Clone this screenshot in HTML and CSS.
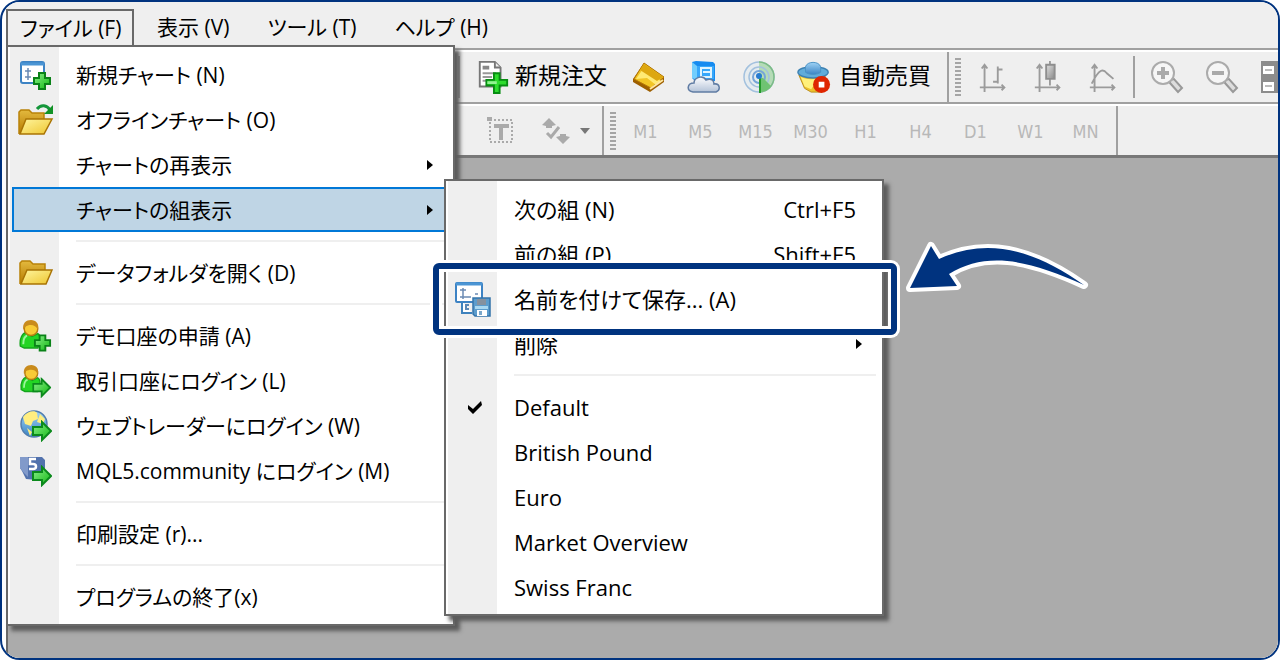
FILE: index.html
```html
<!DOCTYPE html>
<html lang="ja">
<head>
<meta charset="utf-8">
<title>チャートの組表示</title>
<meta name="viewport" content="width=device-width, initial-scale=1">
<link rel="stylesheet" href="styles.css">
</head>
<body>
<svg class="defs" width="0" height="0" aria-hidden="true">
  <defs>
    <linearGradient id="gold" x1="0" y1="0" x2="1" y2="1"><stop offset="0" stop-color="#fff6a0"/><stop offset="1" stop-color="#eec52e"/></linearGradient>
    <linearGradient id="goldDark" x1="0" y1="0" x2="0" y2="1"><stop offset="0" stop-color="#e3b93e"/><stop offset="1" stop-color="#b67a00"/></linearGradient>
    <linearGradient id="green" x1="0" y1="0" x2="1" y2="1"><stop offset="0" stop-color="#8cf08c"/><stop offset="1" stop-color="#12b812"/></linearGradient>
    <linearGradient id="blue" x1="0" y1="0" x2="0" y2="1"><stop offset="0" stop-color="#9fd2f5"/><stop offset="1" stop-color="#3b85c4"/></linearGradient>
    <linearGradient id="steel" x1="0" y1="0" x2="0" y2="1"><stop offset="0" stop-color="#fdfdfe"/><stop offset="1" stop-color="#b4c3d8"/></linearGradient>
    <linearGradient id="grey" x1="0" y1="0" x2="1" y2="1"><stop offset="0" stop-color="#e0e0e0"/><stop offset="1" stop-color="#888"/></linearGradient>
    <symbol id="arrow" viewBox="0 0 20 22"><path d="M1 7h9V2l9 9-9 9v-5H1z" fill="url(#green)" stroke="#0b8a1c" stroke-width="2"/></symbol>
    <symbol id="plus" viewBox="0 0 20 20"><path d="M7 2h6v5h5v6h-5v5H7v-5H2V7h5z" fill="url(#green)" stroke="#0a8218" stroke-width="2"/></symbol>
    <symbol id="person" viewBox="0 0 24 32"><path d="M1 28c-1-8 2-13 6-14l6 4 6-3c3 2 3 6 2 10l-2 5H5z" fill="#24d524" stroke="#14a41c" stroke-width="1.5"/><path d="M4 26c0-5 1-8 4-9" stroke="#9cf59c" stroke-width="2" fill="none"/><circle cx="12" cy="10" r="7" fill="#f8cb35" stroke="#b67d12" stroke-width="1.5"/><path d="M4 11C3 4 7 1 12 1s9 4 7 10c-2-5-8-6-13-3z" fill="#c98b1c"/></symbol>
  </defs>
</svg>
<div class="app">
  <div class="window">
    <header class="menubar">
      <nav class="menubar-items" aria-label="メニュー">
        <button class="menu-title is-open" type="button" aria-haspopup="menu" aria-expanded="true">ファイル (F)</button>
        <button class="menu-title" type="button">表示 (V)</button>
        <button class="menu-title" type="button">ツール (T)</button>
        <button class="menu-title" type="button">ヘルプ (H)</button>
      </nav>

      <div class="menu file-menu" role="menu" aria-label="ファイル">
        <button class="item" role="menuitem" type="button">
          <span class="item-icon"><svg class="icon" viewBox="0 0 34 32"><rect x="2" y="3" width="23" height="21" rx="2" fill="#fff" stroke="#3d83c4" stroke-width="2"/><path d="M2 5h23" stroke="#4b95d4" stroke-width="3"/><path d="M9 9v12M6 12h6M6 18h6" stroke="#6b8bb4" stroke-width="1.5"/><use href="#plus" x="13" y="12" width="20" height="20"/></svg></span>
          <span class="label">新規チャート (N)</span></button>
        <button class="item" role="menuitem" type="button">
          <span class="item-icon"><svg class="icon wide" viewBox="0 0 38 34"><path d="M2 31V9l2-2h8l3 3h12v7" fill="url(#goldDark)" stroke="#b98209" stroke-width="1.5"/><path d="M3 31l6-15h26l-8 15z" fill="url(#gold)" stroke="#a97405" stroke-width="1.5"/><path d="M20 6c4-5 10-4 13 1" fill="none" stroke="#14963a" stroke-width="3"/><path d="M36 2v9h-9z" fill="#119226"/></svg></span>
          <span class="label">オフラインチャート (O)</span></button>
        <button class="item" role="menuitem" type="button" aria-haspopup="menu"><span class="item-icon"></span><span class="label">チャートの再表示</span><svg class="more" viewBox="0 0 6 10"><path d="M0 0l6 5-6 5z"/></svg></button>
        <button class="item is-active" role="menuitem" type="button" aria-haspopup="menu" aria-expanded="true"><span class="item-icon"></span><span class="label">チャートの組表示</span><svg class="more" viewBox="0 0 6 10"><path d="M0 0l6 5-6 5z"/></svg></button>
        <hr class="rule">
        <button class="item" role="menuitem" type="button">
          <span class="item-icon"><svg class="icon" viewBox="0 0 34 32"><path d="M1 27V6l2-2h8l3 3h12v7" fill="url(#goldDark)" stroke="#b98209" stroke-width="1.5"/><path d="M2 27l6-14h25l-6 14z" fill="url(#gold)" stroke="#a97405" stroke-width="1.5"/></svg></span>
          <span class="label">データフォルダを開く (D)</span></button>
        <hr class="rule">
        <button class="item" role="menuitem" type="button"><span class="item-icon"><svg class="icon" viewBox="0 0 34 34"><use href="#person" x="0" y="0" width="24" height="31"/><use href="#plus" x="14" y="14" width="19" height="20"/></svg></span><span class="label">デモ口座の申請 (A)</span></button>
        <button class="item" role="menuitem" type="button"><span class="item-icon"><svg class="icon" viewBox="0 0 34 36"><use href="#person" x="0" y="0" width="24" height="31"/><use href="#arrow" x="13" y="14" width="20" height="22"/></svg></span><span class="label">取引口座にログイン (L)</span></button>
        <button class="item" role="menuitem" type="button"><span class="item-icon"><svg class="icon" viewBox="0 0 34 34"><circle cx="15" cy="15" r="13" fill="url(#blue)" stroke="#527eae" stroke-width="1.5"/><path d="M4 8c4-6 12-7 14-4l1 6-5 2-2 5-6-2zM21 5l5 5-2 5-6-2zM8 19l5 4-2 4z" fill="#ffee80"/><use href="#arrow" x="13" y="11" width="20" height="22"/></svg></span><span class="label">ウェブトレーダーにログイン (W)</span></button>
        <button class="item" role="menuitem" type="button"><span class="item-icon"><svg class="icon" viewBox="0 0 34 34"><path d="M1 3h22l3 3v16l-8 4-11-1-4-8-2-3z" fill="#5272ad"/><path d="M1 3h8v20l-4-4-4-5z" fill="#819aca"/><path d="M17 5h-6v5h3c4 0 4 5 0 5h-4" fill="none" stroke="#fff" stroke-width="2.5"/><use href="#arrow" x="13" y="11" width="20" height="22"/></svg></span><span class="label">MQL5.community にログイン (M)</span></button>
        <hr class="rule">
        <button class="item" role="menuitem" type="button"><span class="item-icon"></span><span class="label">印刷設定 (r)...</span></button>
        <hr class="rule">
        <button class="item" role="menuitem" type="button"><span class="item-icon"></span><span class="label">プログラムの終了(x)</span></button>
      </div>

      <div class="menu sub-menu" role="menu" aria-label="チャートの組表示">
        <button class="item" role="menuitem" type="button"><span class="item-icon"></span><span class="label">次の組 (N)</span><span class="keys">Ctrl+F5</span></button>
        <button class="item" role="menuitem" type="button"><span class="item-icon"></span><span class="label">前の組 (P)</span><span class="keys">Shift+F5</span></button>
        <button class="item" role="menuitem" type="button">
          <span class="item-icon"><svg class="icon wide" viewBox="0 0 38 36"><path d="M8 20v12h10" fill="#fff" stroke="#3e82bd" stroke-width="2"/><path d="M15 24h-3v4h3" fill="none" stroke="#5b88b6" stroke-width="2"/><rect x="2" y="2" width="26" height="19" rx="1" fill="#fff" stroke="#3d83c4" stroke-width="2"/><path d="M2 3h26" stroke="#4b95d4" stroke-width="3"/><path d="M9 7v11M6 9h6M6 16h11M21 13h3" stroke="#6b8bb4" stroke-width="1.5"/><path d="M19 17h17v18H21l-2-2z" fill="#5c9ccc" stroke="#3474aa" stroke-width="1.5"/><path d="M23 18h9v6h-9z" fill="#85919f"/><path d="M21 25h13v3H21z" fill="#a9d8f2"/><path d="M23 29h10v6H23z" fill="#fff"/><path d="M25 30h3v4h-3z" fill="#7aa7ca"/></svg></span>
          <span class="label">名前を付けて保存... (A)</span></button>
        <button class="item" role="menuitem" type="button" aria-haspopup="menu"><span class="item-icon"></span><span class="label">削除</span><svg class="more" viewBox="0 0 6 10"><path d="M0 0l6 5-6 5z"/></svg></button>
        <hr class="rule">
        <button class="item" role="menuitemradio" aria-checked="true" type="button"><span class="item-icon"><svg class="check" viewBox="0 0 16 14"><path d="M1 5l5 4 8-8 1 4-9 9-5-5z"/></svg></span><span class="label">Default</span></button>
        <button class="item" role="menuitemradio" aria-checked="false" type="button"><span class="item-icon"></span><span class="label">British Pound</span></button>
        <button class="item" role="menuitemradio" aria-checked="false" type="button"><span class="item-icon"></span><span class="label">Euro</span></button>
        <button class="item" role="menuitemradio" aria-checked="false" type="button"><span class="item-icon"></span><span class="label">Market Overview</span></button>
        <button class="item" role="menuitemradio" aria-checked="false" type="button"><span class="item-icon"></span><span class="label">Swiss Franc</span></button>
      </div>
    </header>

    <div class="toolbar main-tools" role="toolbar" aria-label="標準">
      <span class="divider"></span>
      <button class="tool order" type="button"><svg class="icon" viewBox="0 0 34 36"><path d="M3 2h16l6 6v20H3z" fill="#fff" stroke="#777" stroke-width="2"/><path d="M19 2v6h6" fill="#eee" stroke="#777" stroke-width="2"/><path d="M6 6h7v4H6z" fill="#888"/><path d="M6 14h14M6 18h10M6 22h8" stroke="#999" stroke-width="2"/><path d="M18 14h6v7h8v6h-8v8h-6v-8h-8v-6h8z" fill="#2edc2e" stroke="#078d12" stroke-width="2"/><path d="M11 24h10" stroke="#93f393" stroke-width="3"/></svg><span class="tool-text">新規注文</span></button>
      <button class="tool" type="button" aria-label="ヒストリーセンター"><svg class="icon" viewBox="0 0 34 34"><path d="M1 19L12 3l20 14v5L18 32 1 22z" fill="#9d5f00"/><path d="M2 19L12 3l20 14-13 11z" fill="#f2c525" stroke="#b57805"/><path d="M4 19l7-10 18 12-5 4-9-7z" fill="#ffea74"/><path d="M12 4l19 13-6 4-17-11z" fill="#dda710"/><path d="M18 29l13-9" stroke="#ffe6a0" stroke-width="2"/></svg></button>
      <button class="tool" type="button" aria-label="クラウド"><svg class="icon" viewBox="0 0 34 34"><path d="M5 2l4-1 17 1 2 2v17H8l-3-3z" fill="#168bf0"/><path d="M5 2l5 4v14l-5-2z" fill="#71cdfd"/><path d="M10 6h17v13H10z" fill="#36a7fb"/><path d="M14 8h10v9H14zM16 12h7" stroke="#dff4ff" stroke-width="2" fill="none"/><path d="M6 32c-7-1-6-9 1-9 0-6 9-8 12-3 5-2 8 0 8 4 6-1 7 6 2 8z" fill="url(#steel)" stroke="#617da4" stroke-width="1.5"/></svg></button>
      <button class="tool" type="button" aria-label="シグナル"><svg class="icon" viewBox="0 0 34 34"><circle cx="17" cy="17" r="15" fill="#e6ecef"/><path d="M17 17V2a15 15 0 0 1 0 30z" fill="#b5dcb6"/><g fill="none" stroke="#a3c1de" stroke-width="1.5"><circle cx="17" cy="17" r="15"/><circle cx="17" cy="17" r="10"/><circle cx="17" cy="17" r="6" stroke="#76a5d8" stroke-width="2"/></g><path d="M17 2a15 15 0 0 1 0 30" fill="none" stroke="#7dbd83" stroke-width="1.5"/><path d="M17 18h4l8 8c-3 4-7 6-12 6z" fill="#6fc372"/><path d="M18 18v15" stroke="#239a2b" stroke-width="2"/><circle cx="17" cy="16" r="3" fill="#277bd0"/></svg></button>
      <button class="tool auto" type="button"><svg class="icon" viewBox="0 0 36 34"><path d="M2 15l6 14 7 4h11l4-18z" fill="#edc12c" stroke="#b98b15"/><path d="M4 17c7 3 13 3 19 1l-8 12-7-3z" fill="#fff07b"/><ellipse cx="17" cy="12" rx="16" ry="6" fill="#61acd9" stroke="#3d81b2" stroke-width="1.5"/><path d="M9 12V6c2-6 14-6 16 0v6c-4 3-12 3-16 0z" fill="url(#blue)" stroke="#4a93c5"/><circle cx="26" cy="25" r="9" fill="#df2500"/><path d="M23 22h6v6h-6z" fill="#fff"/></svg><span class="tool-text">自動売買</span></button>
      <span class="divider full"></span><span class="grip"></span>
      <button class="tool chart" type="button" aria-label="バーチャート"><svg class="icon" viewBox="0 0 34 36"><path d="M7 5v29M2 29h26M4 9l3-4 3 4M25 26l3 3-3 3M21 7v18M21 10h5M16 23h5" fill="none" stroke="#9b9b9b" stroke-width="2"/></svg></button>
      <button class="tool chart" type="button" aria-label="ローソク足"><svg class="icon" viewBox="0 0 34 36"><path d="M7 5v29M2 29h26M4 9l3-4 3 4M25 26l3 3-3 3M18 1v26" fill="none" stroke="#9b9b9b" stroke-width="2"/><path d="M14 5h9v15h-9z" fill="url(#grey)" stroke="#8e8e8e" stroke-width="2"/></svg></button>
      <button class="tool chart" type="button" aria-label="ラインチャート"><svg class="icon" viewBox="0 0 34 36"><path d="M7 5v29M2 29h26M4 9l3-4 3 4M25 26l3 3-3 3M4 25C12 9 16 9 20 14l7 6" fill="none" stroke="#9b9b9b" stroke-width="2"/></svg></button>
      <span class="divider"></span>
      <button class="tool zoom" type="button" aria-label="拡大"><svg class="icon" viewBox="0 0 34 34"><path d="M20 20l4-1 8 9-4 4-8-9z" fill="#ddd" stroke="#999" stroke-width="2"/><circle cx="13" cy="13" r="11" fill="#f6f6f6" stroke="#ababab" stroke-width="2"/><path d="M13 7v12M7 13h12" stroke="#aaa" stroke-width="4"/></svg></button>
      <button class="tool zoom" type="button" aria-label="縮小"><svg class="icon" viewBox="0 0 34 34"><path d="M20 20l4-1 8 9-4 4-8-9z" fill="#ddd" stroke="#999" stroke-width="2"/><circle cx="13" cy="13" r="11" fill="#f6f6f6" stroke="#ababab" stroke-width="2"/><path d="M7 13h12" stroke="#aaa" stroke-width="4"/></svg></button>
      <button class="tool tile" type="button" aria-label="整列"><svg class="icon" viewBox="0 0 34 34"><path d="M1 1h32v32H1z" fill="#8c8c8c"/><path d="M3 6h11v8H3zM18 6h13v8H18zM3 22h11v9H3zM18 22h13v9H18z" fill="#fff"/><path d="M5 10h7M5 26h7" stroke="#bbb" stroke-width="2"/></svg></button>
    </div>

    <div class="toolbar period-tools" role="toolbar" aria-label="時間足">
      <button class="tool text-tool" type="button" aria-label="テキスト"><svg class="icon small" viewBox="0 0 28 28"><path d="M3 3h22v22H3z" fill="none" stroke="#aaa" stroke-width="2" stroke-dasharray="2 2"/><path d="M0 0h5v4H0z" fill="#aaa"/><path d="M7 9h15M14 9v14" stroke="#aaa" stroke-width="4" fill="none"/></svg></button>
      <button class="tool objects" type="button" aria-label="オブジェクト"><svg class="icon small" viewBox="0 0 28 28"><path d="M0 8l7-7 7 7-4 1v2H4V9zM14 20l4-1v-2h6v2l4 1-7 7z" fill="#aaa"/><path d="M5 16l4 4 8-10" fill="none" stroke="#aaa" stroke-width="3"/></svg><svg class="drop" viewBox="0 0 10 6"><path d="M0 0h10L5 6z" fill="#777"/></svg></button>
      <span class="divider full"></span><span class="grip"></span>
      <button class="period" type="button">M1</button><button class="period" type="button">M5</button><button class="period" type="button">M15</button><button class="period" type="button">M30</button><button class="period" type="button">H1</button><button class="period" type="button">H4</button><button class="period" type="button">D1</button><button class="period" type="button">W1</button><button class="period" type="button">MN</button>
      <span class="divider full period-end"></span>
    </div>
    <main class="workspace"></main>
  </div>

  <div class="highlight"></div>
  <svg class="pointer" viewBox="0 0 190 60" aria-hidden="true"><path d="M10 48L31 6l8 13C85 -2 130 7 184 45 125 18 85 12 49 34l8 12z" fill="#fff" stroke="#fff" stroke-width="8" stroke-linejoin="round"/><path d="M10 48L31 6l8 13C85 -2 130 7 184 45 125 18 85 12 49 34l8 12z" fill="#00337f"/></svg>
</div>
</body>
</html>
```
FILE: styles.css
```css
* { box-sizing: border-box; }

body {
  margin: 0;
  background: #fff;
  color: #000;
  font: 22px/30px "Open Sans", "Noto Sans CJK JP", sans-serif;
  font-feature-settings: "palt";
}

button {
  margin: 0;
  padding: 0;
  border: 0;
  background: none;
  color: inherit;
  font: inherit;
  font-feature-settings: inherit;
  text-align: left;
  white-space: nowrap;
}

svg { display: block; flex: none; }

.defs { position: absolute; }

.app {
  position: relative;
  height: 100vh;
  padding-left: 4px;
  overflow: hidden;
  border: 2px solid #00337f;
  border-radius: 20px;
  background: #fff;
}

.window {
  display: flex;
  flex-direction: column;
  height: 100%;
  background: #efefef;
}

/* Menu bar */
.menubar { position: relative; height: 48px; flex: none; border-bottom: 2px solid #a0a0a0; }
.menubar-items { display: flex; padding-top: 7px; font-size: 21px; }
.menu-title { height: 36px; padding: 0 19px; line-height: 36px; }
.menu-title.is-open {
  width: 128px;
  margin-right: 4px;
  padding: 0 12px;
  border: 2px solid #696969;
  border-bottom: 0;
  line-height: 32px;
}

/* Drop-down menus */
.menu {
  position: absolute;
  display: flex;
  flex-direction: column;
  padding: 5px 2px;
  border: 2px solid #696969;
  background: linear-gradient(90deg, #fff 2px, #efefef 2px 51px, #fff 51px);
  box-shadow: 5px 5px 4px #5c5c5c;
}
.file-menu { top: 43px; left: 0; z-index: 1; width: 449px; font-size: 21px; }
.sub-menu { top: 177px; left: 438px; z-index: 2; width: 440px; }

.item {
  display: flex;
  align-items: center;
  height: 45px;
  padding-right: 18px;
}
.item-icon { display: flex; justify-content: center; width: 50px; flex: none; }
.item.is-active { margin: 0 2px; padding-right: 14px; border: 2px solid #0078d7; background: #bfd5e5; }
.item.is-active .item-icon { width: 46px; }
.file-menu .item-icon { padding-left: 2px; }
.label { flex: 1; padding-left: 16px; }
.keys { padding-right: 6px; }
.rule { width: calc(100% - 70px); height: 2px; margin: 8px 4px 8px auto; border: 0; background: #efefef; }
.more { width: 6px; height: 10px; }
.check { width: 16px; height: 14px; margin-left: 4px; }
.icon { width: 34px; height: 34px; }
.icon.wide { width: 38px; height: 36px; }
.icon.small { width: 28px; height: 28px; }

/* Toolbars */
.toolbar {
  display: flex;
  align-items: center;
  height: 54px;
  flex: none;
  border-top: 2px solid #fff;
  border-bottom: 2px solid #a0a0a0;
}
.divider { width: 2px; height: 42px; flex: none; background: #a0a0a0; }
.divider.full { height: 100%; }
.grip {
  width: 6px;
  height: 38px;
  flex: none;
  margin: 0 2px 0 6px;
  background: repeating-linear-gradient(#a5a5a5 0 2px, #efefef 2px 4px);
}
.tool { display: flex; align-items: center; flex: none; margin-right: 21px; }
.tool-text { padding-bottom: 4px; font-size: 23px; }

.main-tools { padding-left: 452px; }
.main-tools .grip { margin-right: 16px; }
.order { gap: 5px; width: 156px; margin: 0 0 0 16px; }
.auto { gap: 8px; margin-right: 16px; }
.chart:has(+ .divider) { margin-right: 12px; }
.zoom { margin: 0 6px 0 15px; }
.tile { margin: 0 0 0 15px; }

.period-tools { padding-left: 481px; border-bottom: 3px solid #787878; }
.text-tool { margin-right: 27px; }
.objects { gap: 10px; margin-right: 12px; }
.drop { width: 10px; height: 6px; }
.period {
  width: 55px;
  padding-top: 2px;
  color: #b8b8b8;
  font: 18px/30px "DejaVu Sans Condensed", "DejaVu Sans", sans-serif;
  text-align: center;
}
.period-end { margin-left: 3px; }

.workspace { flex: 1; border-left: 2px solid #696969; background: #ababab; }

/* Annotation */
.highlight {
  position: absolute;
  top: 261px;
  left: 431px;
  z-index: 3;
  width: 464px;
  height: 72px;
  border: 6px solid #00337f;
  border-radius: 6px;
  box-shadow: 0 0 0 3px #fff, inset 0 0 0 3px #fff;
}
.pointer { position: absolute; top: 238px; left: 898px; z-index: 3; width: 190px; height: 60px; }
```
